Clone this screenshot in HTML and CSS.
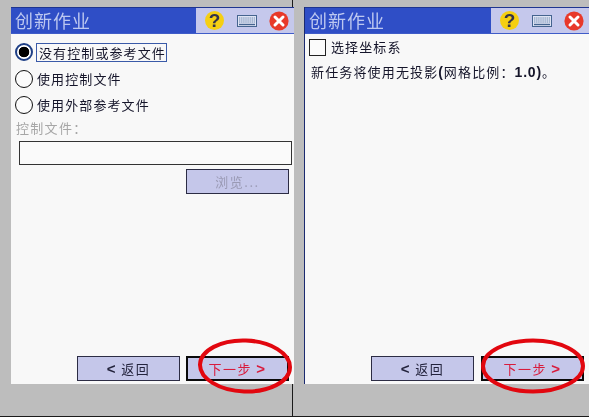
FILE: index.html
```html
<!DOCTYPE html>
<html lang="zh">
<head>
<meta charset="utf-8">
<title>创新作业</title>
<link rel="stylesheet" href="styles.css">
</head>
<body>
<svg class="defs" width="0" height="0" aria-hidden="true">
  <symbol id="kb" viewBox="0 0 20 12">
    <rect x="0.5" y="0.5" width="19" height="11" fill="#dfe4f4" stroke="#45648f"/>
    <path d="M2 3h16M2 5h16M2 7h16" stroke="#6f8ab0" stroke-dasharray="1.4 .7"/>
    <path d="M2 9.5h16" stroke="#45648f" stroke-width="1.4"/>
  </symbol>
  <symbol id="close" viewBox="0 0 20 20">
    <circle cx="10" cy="10" r="9.6" fill="#e8392a"/>
    <path d="M6 6l8 8M14 6l-8 8" stroke="#fff" stroke-width="3" stroke-linecap="round"/>
  </symbol>
</svg>
<main class="desk">
  <section class="pane pane-left">
    <div class="window window-left">
      <header class="titlebar">
        <h1 class="title">创新作业</h1>
        <div class="tools">
          <span class="help">?</span>
          <svg class="kb"><use href="#kb"/></svg>
          <svg class="close"><use href="#close"/></svg>
        </div>
      </header>
      <div class="content content-left">
        <label class="radio-row first"><span class="radio on"></span><span class="focus">没有控制或参考文件</span></label>
        <label class="radio-row"><span class="radio"></span><span class="plain">使用控制文件</span></label>
        <label class="radio-row"><span class="radio"></span><span class="plain">使用外部参考文件</span></label>
        <div class="muted">控制文件：</div>
        <div class="input"></div>
        <div class="browse-row"><button class="btn btn-off">浏览...</button></div>
      </div>
      <footer class="actions">
        <button class="btn"><b>&lt;</b> 返回</button>
        <button class="btn btn-next">下一步 <b>&gt;</b></button>
      </footer>
      <svg class="ring" viewBox="0 0 94 56"><ellipse cx="47" cy="28" rx="45" ry="25.5" transform="rotate(2 47 28)"/></svg>
    </div>
  </section>
  <section class="pane pane-right">
    <div class="window window-right">
      <header class="titlebar">
        <h1 class="title">创新作业</h1>
        <div class="tools">
          <span class="help">?</span>
          <svg class="kb"><use href="#kb"/></svg>
          <svg class="close"><use href="#close"/></svg>
        </div>
      </header>
      <div class="content content-right">
        <label class="check-row"><span class="check"></span><span class="plain">选择坐标系</span></label>
        <p class="note">新任务将使用无投影<b>(</b>网格比例：<b>1.0)</b>。</p>
      </div>
      <footer class="actions">
        <button class="btn"><b>&lt;</b> 返回</button>
        <button class="btn btn-next">下一步 <b>&gt;</b></button>
      </footer>
      <svg class="ring" viewBox="0 0 104 56"><ellipse cx="52" cy="28" rx="50" ry="25.5"/></svg>
    </div>
  </section>
</main>
</body>
</html>
```
FILE: styles.css
```css
* { box-sizing: border-box; }
html, body { margin: 0; padding: 0; }
body {
  width: 589px;
  height: 417px;
  overflow: hidden;
  background: #bdbdbd;
  font-family: "Noto Sans CJK SC", "Liberation Sans", sans-serif;
  color: #15152a;
}
.defs { position: absolute; }
.desk {
  display: flex;
  height: 417px;
  border-bottom: 1px solid #1a1a1a;
  filter: blur(.3px);
}
.pane { padding-top: 7px; }
.pane-left {
  width: 293px;
  padding-left: 11px;
  border-right: 1px solid #1a1a1a;
}
.pane-right {
  width: 296px;
  padding-left: 11px;
}
.window {
  position: relative;
  height: 377px;
  background: #f8f8f8;
  display: flex;
  flex-direction: column;
}
.window-left { width: 283px; }
.window-right { width: 285px; border-left: 1px solid #1b2a70; }
.titlebar {
  display: flex;
  height: 27px;
  flex: none;
  background: #2f4ec6;
  border-top: 1px solid #1f3590;
  border-bottom: 1px solid #3f5cc8;
}
.title {
  margin: 0;
  flex: 1;
  padding-left: 4px;
  font-size: 18px;
  line-height: 24px;
  font-weight: 400;
  letter-spacing: 1px;
  color: #bcc7f0;
}
.window-right .title { padding-left: 4px; }
.tools {
  width: 98px;
  display: flex;
  align-items: center;
  gap: 13px;
  padding-left: 9px;
  background: #c5c8ec;
}
.help {
  width: 19px;
  height: 19px;
  border-radius: 50%;
  background: #f5cf12;
  color: #33334a;
  font: 700 19px/19px "Liberation Sans", sans-serif;
  text-align: center;
}
.kb { width: 20px; height: 12px; }
.close { width: 20px; height: 20px; margin-left: -1px; }
.content { flex: 1; font-size: 13px; letter-spacing: 1.1px; }
.content-left { padding: 9px 0 0 4px; }
.content-right { padding: 4px 0 0 4px; }
.radio-row { display: flex; align-items: center; gap: 5px; height: 18px; margin-bottom: 8px; line-height: 18px; }
.radio-row.first { margin-bottom: 9px; gap: 4px; }
.radio {
  width: 18px;
  height: 18px;
  flex: none;
  border: 1.5px solid #111;
  border-radius: 50%;
  background: #fbfbfb;
}
.radio.on {
  border: 2px solid #1e3f86;
  background: radial-gradient(circle, #000 0 5px, #fff 5.6px);
}
.focus { border: 1px solid #3a5aa8; padding: 0 0 0 2px; height: 19px; line-height: 17px; width: 131px; white-space: nowrap; margin-left: -1px; }
.plain { white-space: nowrap; margin-left: -1px; }
.muted { color: #a6a6a6; height: 18px; line-height: 18px; margin-top: -3px; letter-spacing: 1.3px; margin-left: 1px; }
.input {
  width: 273px;
  height: 24px;
  margin: 4px 0 0 4px;
  border: 1px solid #333;
  border-width: 1px 1.5px 1.5px 1.5px;
  background: #fafafa;
}
.browse-row { display: flex; justify-content: flex-end; margin: 4px 2px 0 0; padding-right: 3px; }
.btn {
  width: 103px;
  height: 25px;
  padding: 0;
  background: #c5c7ea;
  border: 1px solid #2c2c44;
  border-width: 1px 1px 1.5px 1px;
  font-family: inherit;
  font-size: 13px;
  line-height: 22px;
  letter-spacing: 1.5px;
  color: #23233c;
}
.btn b { font: 700 15px "Liberation Sans", sans-serif; }
.btn-off { color: #9a9ab4; letter-spacing: 1.5px; }
.btn-next { border: 2px solid #0a0a0a; color: #d81b3c; }
.actions {
  display: flex;
  justify-content: flex-end;
  gap: 6px;
  padding: 0 5px 3px 0;
}
.window-right .actions { gap: 7px; padding-right: 5px; }
.check-row { display: flex; align-items: center; gap: 6px; height: 18px; line-height: 18px; }
.check { width: 17px; height: 17px; border: 1.5px solid #222; background: #fbfbfb; }
.note { margin: 7px 0 0 2px; line-height: 18px; letter-spacing: 1.15px; white-space: nowrap; }
.note b { font: 700 14px/18px "Liberation Sans", sans-serif; letter-spacing: .8px; }
.ring { position: absolute; fill: none; stroke: #e2070f; stroke-width: 4px; }
.window-left .ring { left: 187px; top: 331px; width: 94px; height: 56px; }
.window-right .ring { left: 176px; top: 331px; width: 104px; height: 56px; }
```
